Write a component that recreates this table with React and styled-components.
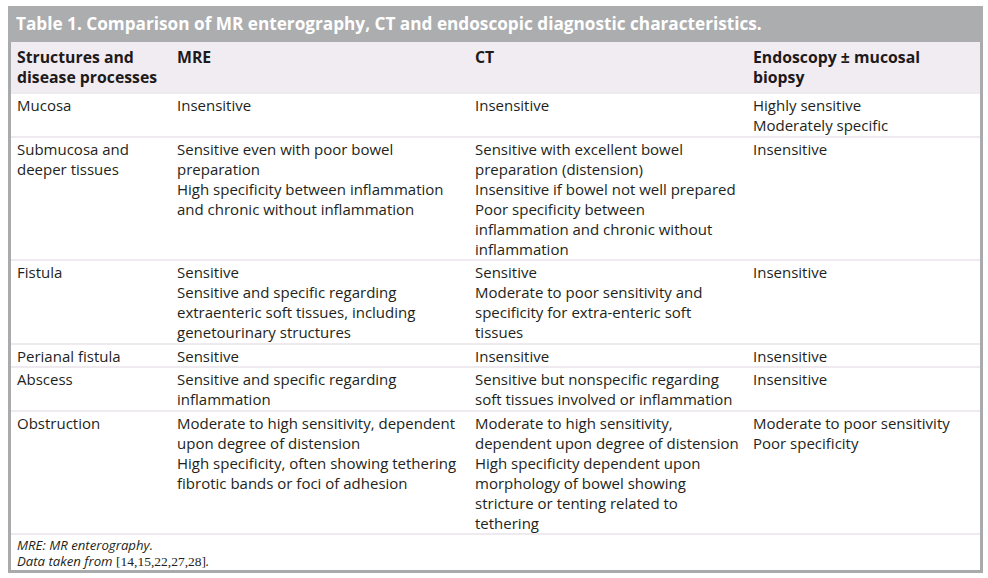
import React from "react";
import styled, { createGlobalStyle } from "styled-components";

const Global = createGlobalStyle`
  html, body { margin: 0; padding: 0; background: #ffffff; }
  body { font-family: "Open Sans", "Noto Sans", sans-serif; color: #231f20; }
`;

const Frame = styled.div`
  margin: 6px 0 0 8px;
  width: 975px;
  box-sizing: border-box;
  border: 3px solid #a9aaac;
  border-top: none;
`;

const Title = styled.div`
  background: #acadaf;
  color: #ffffff;
  font-weight: 700;
  font-size: 17.2px;
  height: 36px;
  line-height: 36px;
  margin: 0 -3px;
  padding-left: 8px;
  white-space: nowrap;
`;

const Table = styled.table`
  width: 100%;
  border-collapse: separate;
  border-spacing: 0;
  table-layout: fixed;
  font-size: 15px;
  line-height: 20px;
`;

const HeadRow = styled.tr`
  background: #f1ecf1;
`;

const Th = styled.th`
  text-align: left;
  vertical-align: top;
  font-weight: 700;
  font-size: 15.8px;
  padding: 5px 7px 5px 6px;
  color: #1e1a1b;
`;

const Td = styled.td`
  vertical-align: top;
  border-top: 2px solid #efeaef;
  padding: 1px 7px 0.5px 6px;
`;

const Line = styled.div``;

const Foot = styled.div`
  border-top: 2px solid #efeaef;
  padding: 3px 6px 1px 6px;
  font-size: 13.2px;
  line-height: 15.5px;
  font-style: italic;
`;

const FootLine = styled.div``;

const Ref = styled.span`
  font-family: "Liberation Serif", serif;
  font-style: normal;
  font-size: 13.5px;
`;

const rows = [
  ["Mucosa", ["Insensitive"], ["Insensitive"], ["Highly sensitive", "Moderately specific"]],
  [
    "Submucosa and deeper tissues",
    ["Sensitive even with poor bowel preparation", "High specificity between inflammation and chronic without inflammation"],
    ["Sensitive with excellent bowel preparation (distension)", "Insensitive if bowel not well prepared", "Poor specificity between inflammation and chronic without inflammation"],
    ["Insensitive"],
  ],
  [
    "Fistula",
    ["Sensitive", "Sensitive and specific regarding extraenteric soft tissues, including genetourinary structures"],
    ["Sensitive", "Moderate to poor sensitivity and specificity for extra-enteric soft tissues"],
    ["Insensitive"],
  ],
  ["Perianal fistula", ["Sensitive"], ["Insensitive"], ["Insensitive"]],
  [
    "Abscess",
    ["Sensitive and specific regarding inflammation"],
    ["Sensitive but nonspecific regarding soft tissues involved or inflammation"],
    ["Insensitive"],
  ],
  [
    "Obstruction",
    ["Moderate to high sensitivity, dependent upon degree of distension", "High specificity, often showing tethering fibrotic bands or foci of adhesion"],
    ["Moderate to high sensitivity, dependent upon degree of distension", "High specificity dependent upon morphology of bowel showing stricture or tenting related to tethering"],
    ["Moderate to poor sensitivity", "Poor specificity"],
  ],
];

export default function App() {
  return (
    <>
      <Global />
      <Frame>
        <Title>Table 1. Comparison of MR enterography, CT and endoscopic diagnostic characteristics.</Title>
        <Table>
          <colgroup>
            <col style={{ width: 160 }} />
            <col style={{ width: 298 }} />
            <col style={{ width: 278 }} />
            <col />
          </colgroup>
          <thead>
            <HeadRow>
              <Th>Structures and disease processes</Th>
              <Th>MRE</Th>
              <Th>CT</Th>
              <Th>Endoscopy ± mucosal biopsy</Th>
            </HeadRow>
          </thead>
          <tbody>
            {rows.map((r, i) => (
              <tr key={i}>
                <Td>{r[0]}</Td>
                {[r[1], r[2], r[3]].map((c, j) => (
                  <Td key={j}>
                    {c.map((l, k) => (
                      <Line key={k}>{l}</Line>
                    ))}
                  </Td>
                ))}
              </tr>
            ))}
          </tbody>
        </Table>
        <Foot>
          <FootLine>MRE: MR enterography.</FootLine>
          <FootLine>
            Data taken from <Ref>[14,15,22,27,28]</Ref>.
          </FootLine>
        </Foot>
      </Frame>
    </>
  );
}
